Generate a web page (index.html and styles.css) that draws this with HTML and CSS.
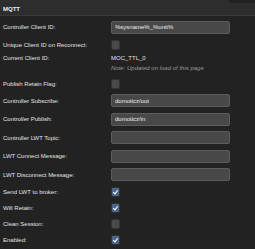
FILE: index.html
```html
<!DOCTYPE html>
<html lang="en">
<head>
    <meta charset="UTF-8">
    <title>MQTT</title>
    <link rel="stylesheet" href="styles.css">
</head>
<body>
    <div class="topline"></div>
    <div class="section">MQTT</div>
    <div class="form">
        <div class="row inp">
            <label>Controller Client ID:</label>
            <input type="text" class="field" value="%sysname%_%unit%">
        </div>
        <div class="row chk">
            <label>Unique Client ID on Reconnect:</label>
            <span class="box"></span>
        </div>
        <div class="row txt">
            <label>Current Client ID:</label>
            <div class="value">
                <div>MOC_TTL_0</div>
                <div class="note">Note: Updated on load of this page</div>
            </div>
        </div>
        <div class="row chk">
            <label>Publish Retain Flag:</label>
            <span class="box"></span>
        </div>
        <div class="row inp">
            <label>Controller Subscribe:</label>
            <input type="text" class="field" value="domoticz/out">
        </div>
        <div class="row inp">
            <label>Controller Publish:</label>
            <input type="text" class="field" value="domoticz/in">
        </div>
        <div class="row inp">
            <label>Controller LWT Topic:</label>
            <input type="text" class="field" value="">
        </div>
        <div class="row inp">
            <label>LWT Connect Message:</label>
            <input type="text" class="field" value="">
        </div>
        <div class="row inp">
            <label>LWT Disconnect Message:</label>
            <input type="text" class="field" value="">
        </div>
        <div class="row chk">
            <label>Send LWT to broker:</label>
            <span class="box on"></span>
        </div>
        <div class="row chk">
            <label>Will Retain:</label>
            <span class="box on"></span>
        </div>
        <div class="row chk">
            <label>Clean Session:</label>
            <span class="box"></span>
        </div>
        <div class="row chk">
            <label>Enabled:</label>
            <span class="box on"></span>
        </div>
    </div>
</body>
</html>
```

FILE: styles.css
```css
body {
    margin: 0;
    background-color: #222;
    color: #e2e2e2;
    font-family: "Liberation Sans", Arial, sans-serif;
    font-size: 6px;
    overflow: hidden;
}

.topline {
    height: 3px;
    width: 229px;
    background-color: #2e2e2e;
}

.section {
    height: 12px;
    line-height: 12px;
    padding-left: 3px;
    background-color: #2d2d2d;
    border-bottom: 1px solid #3a3a3a;
    font-weight: bold;
    color: #eee;
}

.form {
    padding-top: 2px;
}

.row {
    display: flex;
    align-items: center;
}

.row label {
    width: 108px;
    padding-left: 3px;
    flex-shrink: 0;
}

.row.inp {
    height: 18.5px;
}

.row.chk {
    height: 16px;
}

.row.txt {
    align-items: flex-start;
    height: 23px;
    padding-top: 2px;
    box-sizing: border-box;
}

.field {
    box-sizing: border-box;
    width: 119px;
    height: 13px;
    margin: 0;
    padding: 0 3px;
    background-color: #484848;
    border: 1px solid #5c5c5c;
    border-radius: 2px;
    color: #eee;
    font-family: "Liberation Sans", Arial, sans-serif;
    font-size: 6px;
}

.value .note {
    margin-top: 4px;
    font-style: italic;
    color: #999;
}

.box {
    width: 9px;
    height: 10px;
    border-radius: 2px;
    background-color: #4a4a4a;
    border: 1px solid #333;
    box-sizing: border-box;
    position: relative;
}

.box.on {
    background-color: #4a6688;
}

.box.on::after {
    content: "";
    position: absolute;
    left: 2px;
    top: 1px;
    width: 2px;
    height: 4px;
    border: solid #fff;
    border-width: 0 1.5px 1.5px 0;
    transform: rotate(40deg);
}
```
